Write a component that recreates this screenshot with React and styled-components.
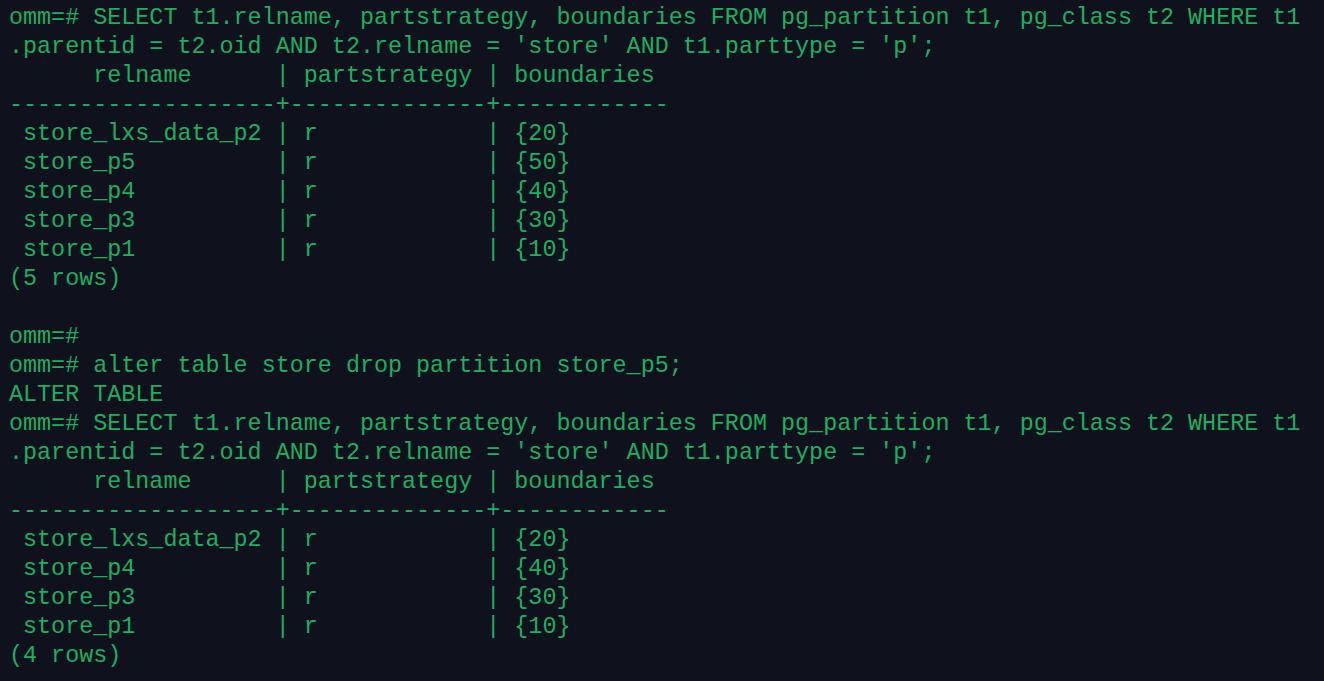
import styled, { createGlobalStyle } from 'styled-components';

const GlobalStyle = createGlobalStyle`
    html, body {
        margin: 0;
        padding: 0;
        background: #0f111d;
    }
`;

const lines = [
    "omm=# SELECT t1.relname, partstrategy, boundaries FROM pg_partition t1, pg_class t2 WHERE t1",
    ".parentid = t2.oid AND t2.relname = 'store' AND t1.parttype = 'p';",
    "      relname      | partstrategy | boundaries",
    "-------------------+--------------+------------",
    " store_lxs_data_p2 | r            | {20}",
    " store_p5          | r            | {50}",
    " store_p4          | r            | {40}",
    " store_p3          | r            | {30}",
    " store_p1          | r            | {10}",
    "(5 rows)",
    "",
    "omm=#",
    "omm=# alter table store drop partition store_p5;",
    "ALTER TABLE",
    "omm=# SELECT t1.relname, partstrategy, boundaries FROM pg_partition t1, pg_class t2 WHERE t1",
    ".parentid = t2.oid AND t2.relname = 'store' AND t1.parttype = 'p';",
    "      relname      | partstrategy | boundaries",
    "-------------------+--------------+------------",
    " store_lxs_data_p2 | r            | {20}",
    " store_p4          | r            | {40}",
    " store_p3          | r            | {30}",
    " store_p1          | r            | {10}",
    "(4 rows)",
];

export default function App() {
    return (
        <>
            <GlobalStyle />
            <Terminal>
                {lines.map((l, i) => (
                    <Line key={i}>{l === '' ? ' ' : l}</Line>
                ))}
            </Terminal>
        </>
    );
}

// Styled components

const Terminal = styled.div`
    width: 1324px;
    height: 681px;
    box-sizing: border-box;
    padding: 4px 0 0 9px;
    background: #0f111d;
    overflow: hidden;
`;

const Line = styled.div`
    font-family: "Courier New", "Nimbus Mono PS", "FreeMono", "Liberation Mono", monospace;
    font-size: 23.4px;
    line-height: 29px;
    height: 29px;
    color: #1fae5f;
    white-space: pre;
`;
